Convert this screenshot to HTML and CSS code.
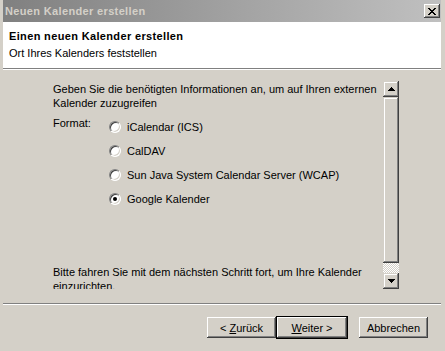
FILE: index.html
```html
<!DOCTYPE html>
<html lang="de">
<head>
    <meta charset="UTF-8">
    <meta name="viewport" content="width=device-width, initial-scale=1.0">
    <title>Neuen Kalender erstellen</title>
    <link rel="stylesheet" href="styles.css">
</head>
<body>
    <div class="window">
        <div class="titlebar">
            <span class="title">Neuen Kalender erstellen</span>
            <button class="close">
                <svg width="8" height="7" viewBox="0 0 8 7" shape-rendering="crispEdges">
                    <path d="M0 0h2v1h1v1h2V1h1V0h2v1H7v1H6v1H5v1h1v1h1v1h1v1H6V6H5V5H3v1H2v1H0V6h1V5h1V4h1V3H2V2H1V1H0z" fill="#000"/>
                </svg>
            </button>
        </div>

        <div class="header">
            <div class="header-title">Einen neuen Kalender erstellen</div>
            <div class="header-sub">Ort Ihres Kalenders feststellen</div>
        </div>

        <div class="main">
            <div class="scrollbox">
                <div class="scroll-content">
                    <p class="intro">Geben Sie die benötigten Informationen an, um auf Ihren externen<br>Kalender zuzugreifen</p>
                    <div class="format">
                        <span class="format-label">Format:</span>
                        <div class="options">
                            <label class="option"><span class="radio"></span>iCalendar (ICS)</label>
                            <label class="option"><span class="radio"></span>CalDAV</label>
                            <label class="option"><span class="radio"></span>Sun Java System Calendar Server (WCAP)</label>
                            <label class="option"><span class="radio checked"></span>Google Kalender</label>
                        </div>
                    </div>
                    <p class="outro">Bitte fahren Sie mit dem nächsten Schritt fort, um Ihre Kalender<br>einzurichten.</p>
                </div>
                <div class="scrollbar">
                    <div class="sb-btn">
                        <svg width="7" height="4" viewBox="0 0 7 4" shape-rendering="crispEdges"><path d="M3 0h1v1h1v1h1v1h1v1H0V3h1V2h1V1h1z" fill="#000"/></svg>
                    </div>
                    <div class="sb-thumb"></div>
                    <div class="sb-track"></div>
                    <div class="sb-btn">
                        <svg width="7" height="4" viewBox="0 0 7 4" shape-rendering="crispEdges"><path d="M0 0h7v1H6v1H5v1H4v1H3V3H2V2H1V1H0z" fill="#000"/></svg>
                    </div>
                </div>
            </div>
        </div>

        <div class="separator"></div>

        <div class="buttons">
            <button class="btn">&lt; <u>Z</u>urück</button>
            <button class="btn btn-default"><u>W</u>eiter &gt;</button>
            <button class="btn btn-cancel">Abbrechen</button>
        </div>
    </div>
</body>
</html>
```

FILE: styles.css
```css
* {
    margin: 0;
    padding: 0;
    box-sizing: border-box;
}

body {
    width: 445px;
    height: 351px;
    overflow: hidden;
    background: #d4d0c8;
    font-family: "Liberation Sans", Arial, sans-serif;
    font-size: 11px;
    color: #000;
}

.window {
    height: 351px;
    padding: 0 4px 0 3px;
    display: flex;
    flex-direction: column;
}

/* title bar */
.titlebar {
    height: 22px;
    display: flex;
    align-items: center;
    justify-content: space-between;
    padding: 0 1px 0 2px;
    background: linear-gradient(to right, #808080, #c0c0c0);
}

.title {
    font-weight: bold;
    letter-spacing: 0.35px;
    color: #d4d0c8;
}

.close {
    width: 16px;
    height: 14px;
    border: none;
    background: #d4d0c8;
    display: flex;
    align-items: center;
    justify-content: center;
    box-shadow: inset -1px -1px #404040, inset 1px 1px #fff, inset -2px -2px #808080;
}

/* white header */
.header {
    height: 47px;
    background: #fff;
    padding: 7px 6px 0;
    line-height: 14px;
    border-bottom: 1px solid #808080;
}

.header-title {
    font-weight: bold;
    letter-spacing: 0.35px;
}

.header-sub {
    margin-top: 3px;
}

/* content */
.main {
    border-top: 1px solid #fff;
    padding: 11px 0 0 50px;
}

.scrollbox {
    display: flex;
    width: 346px;
    height: 208px;
}

.scroll-content {
    flex: 1;
    overflow: hidden;
    padding-top: 1px;
    line-height: 14px;
}

.format {
    display: flex;
    margin-top: 5px;
}

.format-label {
    width: 56px;
    padding-top: 1px;
}

.option {
    height: 24px;
    display: flex;
    align-items: center;
    gap: 6px;
}

.radio {
    position: relative;
    width: 12px;
    height: 12px;
    border-radius: 50%;
    background: #fff;
    border: 1px solid;
    border-color: #808080 #fff #fff #808080;
    box-shadow: inset 1px 1px #404040, inset -1px -1px #d4d0c8;
}

.radio.checked::after {
    content: "";
    position: absolute;
    left: 3px;
    top: 3px;
    width: 4px;
    height: 4px;
    border-radius: 50%;
    background: #000;
}

.outro {
    margin-top: 54px;
}

/* scrollbar */
.scrollbar {
    width: 16px;
    display: flex;
    flex-direction: column;
}

.sb-btn,
.sb-thumb {
    background: #d4d0c8;
    box-shadow: inset -1px -1px #404040, inset 1px 1px #d4d0c8, inset -2px -2px #808080, inset 2px 2px #fff;
}

.sb-btn {
    height: 16px;
    display: flex;
    align-items: center;
    justify-content: center;
}

.sb-thumb {
    flex: 1;
}

.sb-track {
    height: 10px;
    background: conic-gradient(#d4d0c8 25%, #fff 0 50%, #d4d0c8 0 75%, #fff 0) 0 0 / 2px 2px;
}

/* bottom */
.separator {
    margin-top: 14px;
    border-top: 1px solid #808080;
    border-bottom: 1px solid #fff;
}

.buttons {
    display: flex;
    justify-content: flex-end;
    padding: 12px 13px 0 0;
}

.btn {
    width: 69px;
    height: 21px;
    border: none;
    background: #d4d0c8;
    font: inherit;
    color: #000;
    box-shadow: inset -1px -1px #404040, inset 1px 1px #fff, inset -2px -2px #808080, inset 2px 2px #d4d0c8;
}

.btn-default {
    width: 70px;
    margin-left: 1px;
    outline: 1px solid #000;
}

.btn-cancel {
    margin-left: 12px;
}
```
